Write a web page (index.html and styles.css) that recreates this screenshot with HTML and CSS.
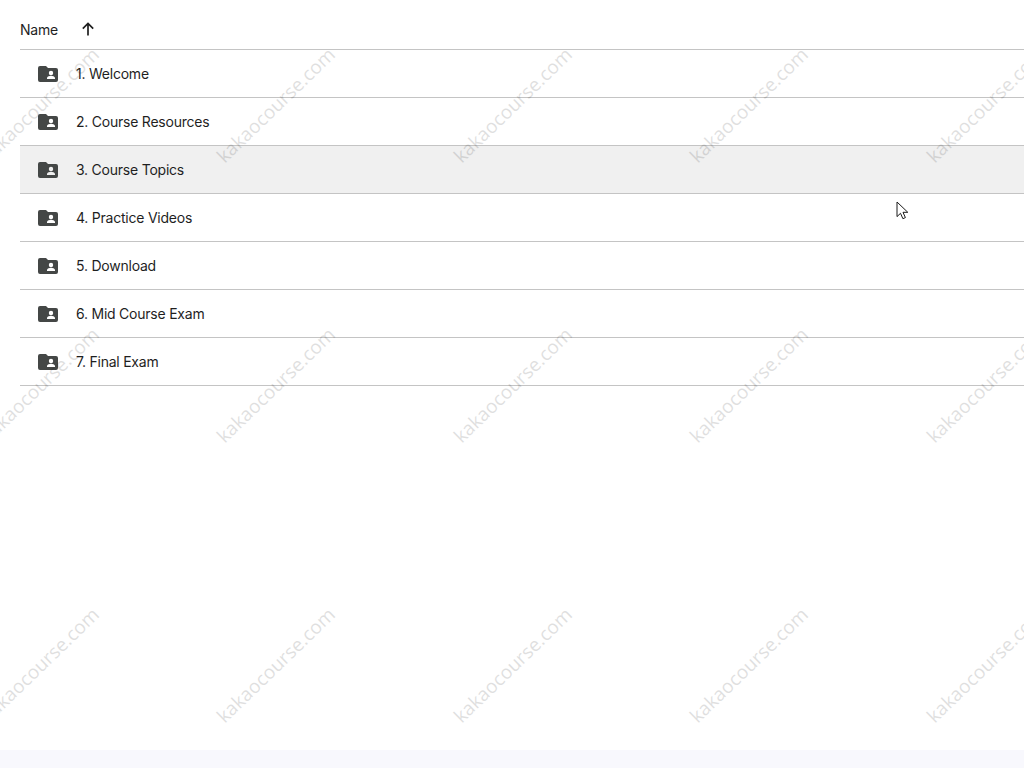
FILE: index.html
```html
<!DOCTYPE html>
<html lang="en">
<head>
<meta charset="utf-8">
<title>Drive folder</title>
<link rel="stylesheet" href="styles.css">
</head>
<body>
<main class="page">
  <section class="list">
    <header class="head">
      <span class="head-name">Name</span>
      <svg class="sort" viewBox="0 0 16 16" width="16" height="16"><path d="M8 14.500V2.500M2.800 7.700 8 2.500l5.200 5.200" fill="none" stroke="#1f1f1f" stroke-width="1.700"/></svg>
    </header>
    <div class="row"><svg class="folder" viewBox="0 0 20 16" width="20" height="16"><use href="#fld"/></svg><span class="label">1. Welcome</span></div>
    <div class="row"><svg class="folder" viewBox="0 0 20 16" width="20" height="16"><use href="#fld"/></svg><span class="label">2. Course Resources</span></div>
    <div class="row row-hover"><svg class="folder" viewBox="0 0 20 16" width="20" height="16"><use href="#fld"/></svg><span class="label">3. Course Topics</span></div>
    <div class="row"><svg class="folder" viewBox="0 0 20 16" width="20" height="16"><use href="#fld"/></svg><span class="label">4. Practice Videos</span></div>
    <div class="row"><svg class="folder" viewBox="0 0 20 16" width="20" height="16"><use href="#fld"/></svg><span class="label">5. Download</span></div>
    <div class="row"><svg class="folder" viewBox="0 0 20 16" width="20" height="16"><use href="#fld"/></svg><span class="label">6. Mid Course Exam</span></div>
    <div class="row"><svg class="folder" viewBox="0 0 20 16" width="20" height="16"><use href="#fld"/></svg><span class="label">7. Final Exam</span></div>
  </section>
  <footer class="band"></footer>
</main>
<div class="marks" aria-hidden="true">
  <span>kakaocourse.com</span><span>kakaocourse.com</span><span>kakaocourse.com</span><span>kakaocourse.com</span><span>kakaocourse.com</span>
  <span>kakaocourse.com</span><span>kakaocourse.com</span><span>kakaocourse.com</span><span>kakaocourse.com</span><span>kakaocourse.com</span>
  <span>kakaocourse.com</span><span>kakaocourse.com</span><span>kakaocourse.com</span><span>kakaocourse.com</span><span>kakaocourse.com</span>
</div>
<svg class="cursor" viewBox="0 0 13 19" width="13" height="19"><path d="M1 1v14.600l3.500-3.300 2.400 5.400 2.500-1.100-2.400-5.300h4.800z" fill="#fff" stroke="#1a1a1a" stroke-width="1"/></svg>
<svg class="defs" width="0" height="0"><defs>
  <symbol id="fld" viewBox="0 0 20 16"><path fill-rule="evenodd" fill="#444746" d="M2 0h6l2 2h8a2 2 0 0 1 2 2v10a2 2 0 0 1-2 2H2a2 2 0 0 1-2-2V2a2 2 0 0 1 2-2zm11 4.800a2.200 2.200 0 1 0 0 4.400 2.200 2.200 0 0 0 0-4.400zM9 13h8v-1.100c0-1.300-2.700-2.100-4-2.100s-4 .8-4 2.100z"/></symbol>
</defs></svg>
</body>
</html>
```
FILE: styles.css
```css
* { box-sizing: border-box; }
html, body { margin: 0; height: 100%; overflow: hidden; background: #fff; }
body { font-family: Inter, "Liberation Sans", sans-serif; color: #1f1f1f; }
.page { height: 768px; display: flex; flex-direction: column; justify-content: space-between; }
.list { margin-left: 20px; }
.head { height: 50px; display: flex; align-items: center; border-bottom: 1px solid #c4c4c4; font-size: 14px; font-weight: 420; letter-spacing: -0.25px; padding-top: 10px; }
.head-name { width: 60px; }
.sort { margin-top: -1px; }
.row { height: 48px; display: flex; align-items: center; gap: 18px; padding-left: 18px; border-bottom: 1px solid #c4c4c4; font-size: 14px; font-weight: 420; letter-spacing: -0.23px; }
.row-hover { background: #f0f0f0; }
.folder { flex: none; }
.band { height: 18px; background: #f8f8fd; }
.marks { position: absolute; left: -79px; top: 0; width: 1103px; height: 768px; overflow: hidden; pointer-events: none; display: grid; grid-template-columns: repeat(5, 236.5px); grid-auto-rows: 280px; padding-top: 93px; }
.marks span { justify-self: center; align-self: start; font-family: "Open Sans", sans-serif; font-size: 19px; line-height: 24px; white-space: nowrap; color: #000; opacity: .12; transform: rotate(-44deg); }
.cursor { position: absolute; left: 896px; top: 201px; }
.defs { position: absolute; }
```
